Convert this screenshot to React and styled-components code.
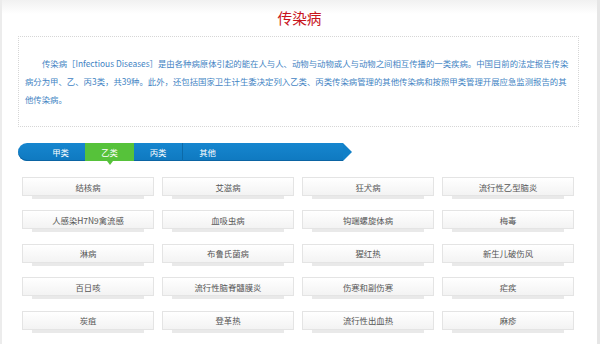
import React from "react";
import styled, { createGlobalStyle } from "styled-components";

const Global = createGlobalStyle`
  html, body { margin: 0; padding: 0; background: #fff; }
  body { font-family: "Noto Sans CJK SC", "Noto Sans", sans-serif; }
  * { box-sizing: border-box; }
`;

const Frame = styled.div`
  width: 600px;
  height: 344px;
  overflow: hidden;
  border-left: 2px solid #ececec;
  border-right: 3px solid #e6e6e6;
  background: linear-gradient(#f1f1f1 0, #fbfbfb 10px, #fff 14px);
`;

const Title = styled.h1`
  margin: 0;
  padding-top: 8px;
  height: 36px;
  text-align: center;
  font-size: 14.7px;
  line-height: 20px;
  font-weight: normal;
  color: #c8141c;
`;

const Intro = styled.div`
  margin: 0 18px 0 16px;
  height: 91px;
  border: 1px dotted #d6d6d6;
  padding: 17px 6px 0 6px;
  font-size: 8.4px;
  line-height: 18px;
  color: #4283c3;
  white-space: nowrap;
`;

const Indent = styled.span`
  display: inline-block;
  width: 17px;
`;

const TabBar = styled.div`
  margin: 16px 0 0 16px;
  display: flex;
  align-items: stretch;
  height: 18px;
  width: 334px;
`;

const TabBody = styled.div`
  position: relative;
  flex: 1;
  display: flex;
  padding-left: 18px;
  border-radius: 9px 0 0 9px;
  background: linear-gradient(#1686cf, #0f79c0);
  box-shadow: inset 0 -1px 0 #0b64a3;
`;

const Arrow = styled.div`
  width: 0;
  height: 0;
  border-top: 9px solid transparent;
  border-bottom: 9px solid transparent;
  border-left: 9px solid #1180c8;
`;

const Tab = styled.div`
  position: relative;
  width: 49px;
  display: flex;
  align-items: center;
  justify-content: center;
  font-size: 8.4px;
  color: #fff;
  background: ${(p) => (p.$active ? "#56c23a" : "transparent")};
  border-right: ${(p) => (p.$divider ? "1px solid #0c6aa8" : "none")};

  ${(p) =>
    p.$active &&
    `
    &::after {
      content: "";
      position: absolute;
      left: 50%;
      bottom: -4px;
      margin-left: -3px;
      border-left: 3px solid transparent;
      border-right: 3px solid transparent;
      border-top: 4px solid #56c23a;
    }
  `}
`;

const Grid = styled.div`
  margin: 16px 0 0 20px;
  display: grid;
  grid-template-columns: repeat(4, 132px);
  column-gap: 8px;
  row-gap: 14.4px;
`;

const Item = styled.div`
  position: relative;
  height: 19px;
  display: flex;
  align-items: center;
  justify-content: center;
  font-size: 8.4px;
  color: #555;
  background: linear-gradient(#ffffff, #f3f3f3);
  border: 1px solid #e4e4e4;

  &::after {
    content: "";
    position: absolute;
    left: 9px;
    right: 9px;
    bottom: -4px;
    height: 3px;
    background: #e9e9e9;
  }
`;

const tabs = [
  { label: "甲类" },
  { label: "乙类", active: true },
  { label: "丙类", divider: true },
  { label: "其他" },
];

const diseases = [
  "结核病", "艾滋病", "狂犬病", "流行性乙型脑炎",
  "人感染H7N9禽流感", "血吸虫病", "钩端螺旋体病", "梅毒",
  "淋病", "布鲁氏菌病", "猩红热", "新生儿破伤风",
  "百日咳", "流行性脑脊髓膜炎", "伤寒和副伤寒", "疟疾",
  "炭疽", "登革热", "流行性出血热", "麻疹",
];

export default function App() {
  return (
    <>
      <Global />
      <Frame>
        <Title>传染病</Title>
        <Intro>
          <Indent />
          传染病［Infectious Diseases］是由各种病原体引起的能在人与人、动物与动物或人与动物之间相互传播的一类疾病。中国目前的法定报告传染
          <br />
          病分为甲、乙、丙3类，共39种。此外，还包括国家卫生计生委决定列入乙类、丙类传染病管理的其他传染病和按照甲类管理开展应急监测报告的其
          <br />
          他传染病。
        </Intro>
        <TabBar>
          <TabBody>
            {tabs.map((t) => (
              <Tab key={t.label} $active={t.active} $divider={t.divider}>
                {t.label}
              </Tab>
            ))}
          </TabBody>
          <Arrow />
        </TabBar>
        <Grid>
          {diseases.map((d) => (
            <Item key={d}>{d}</Item>
          ))}
        </Grid>
      </Frame>
    </>
  );
}
